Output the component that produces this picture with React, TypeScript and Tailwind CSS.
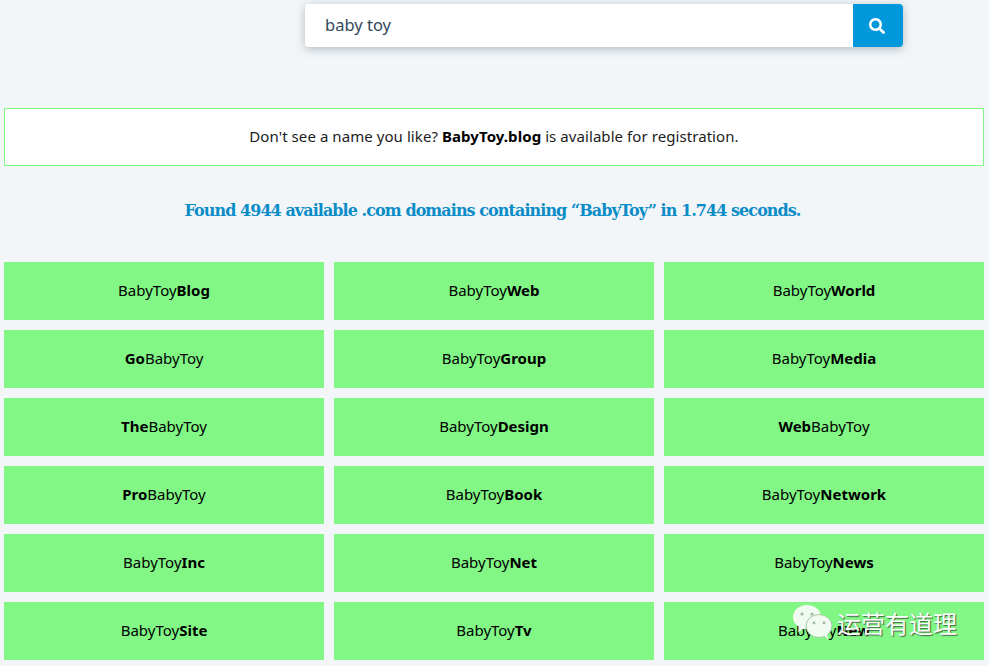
import { FaSearch } from "react-icons/fa";

const names: [string, string, boolean][] = [
  ["BabyToy", "Blog", false],
  ["BabyToy", "Web", false],
  ["BabyToy", "World", false],
  ["Go", "BabyToy", true],
  ["BabyToy", "Group", false],
  ["BabyToy", "Media", false],
  ["The", "BabyToy", true],
  ["BabyToy", "Design", false],
  ["Web", "BabyToy", true],
  ["Pro", "BabyToy", true],
  ["BabyToy", "Book", false],
  ["BabyToy", "Network", false],
  ["BabyToy", "Inc", false],
  ["BabyToy", "Net", false],
  ["BabyToy", "News", false],
  ["BabyToy", "Site", false],
  ["BabyToy", "Tv", false],
  ["BabyToy", "New", false],
];

function WeChatLogo() {
  return (
    <svg width="42" height="36" viewBox="0 0 42 36" className="shrink-0">
      <ellipse cx="15" cy="13" rx="14" ry="12" fill="#f1fbf1" />
      <path d="M7 21 L6 28 L13 24 Z" fill="#f1fbf1" />
      <circle cx="10" cy="10" r="1.6" fill="#9fb8a0" />
      <circle cx="20" cy="10" r="1.6" fill="#9fb8a0" />
      <ellipse cx="27" cy="22" rx="13" ry="11.5" fill="#f1fbf1" stroke="#8fbf8f" strokeWidth="0.8" />
      <path d="M32 31 L36 36 L35 29 Z" fill="#f1fbf1" />
      <circle cx="22" cy="19" r="1.4" fill="#9fb8a0" />
      <circle cx="32" cy="19" r="1.4" fill="#9fb8a0" />
    </svg>
  );
}

export default function App() {
  return (
    <div className="relative h-[666px] w-[989px] overflow-hidden bg-[#f2f6f9] font-['Noto_Sans','Open_Sans',sans-serif] text-black">
      <div className="flex justify-end pr-[86px] pt-1">
        <div className="flex h-[43px] w-[598px] overflow-hidden rounded shadow-[0_2px_10px_rgba(60,75,85,0.35)]">
          <div className="flex flex-1 items-center bg-white pl-[20px] text-[16.5px] text-[#34495e]">baby toy</div>
          <button className="flex w-[50px] items-center justify-center bg-[#0098db] pr-[2px] text-white">
            <FaSearch size={16} />
          </button>
        </div>
      </div>

      <div className="ml-1 mt-[61px] flex h-[58px] w-[980px] items-center justify-center border border-[#82f786] bg-white pb-[2px] text-[15px] tracking-[0.07px] text-[#1c1c1c]">
        <p>
          Don't see a name you like? <b className="text-black">BabyToy.blog</b> is available for registration.
        </p>
      </div>

      <h2 className="mt-[33px] pr-[4px] text-center font-['DejaVu_Serif',serif] text-[16px] font-bold leading-[24px] tracking-[-0.94px] text-[#0a8cc7]">
        Found 4944 available .com domains containing “BabyToy” in 1.744 seconds.
      </h2>

      <div className="ml-1 mt-[39px] grid w-[980px] grid-cols-3 gap-[10px]">
        {names.map(([a, b, boldFirst], i) => (
          <div key={i} className="flex h-[58px] items-center justify-center bg-[#82f786] pb-[2px] text-[15px]">
            {boldFirst ? (
              <span>
                <b>{a}</b>
                {b}
              </span>
            ) : (
              <span>
                {a}
                <b>{b}</b>
              </span>
            )}
          </div>
        ))}
      </div>

      <div className="absolute left-[792px] top-[604px] flex items-start gap-[3px]">
        <WeChatLogo />
        <span className="mt-[4px] font-['Noto_Sans_CJK_SC',sans-serif] text-[24px] leading-[30px] text-white [text-shadow:1px_1px_1px_rgba(40,40,40,0.7)]">
          运营有道理
        </span>
      </div>
    </div>
  );
}
